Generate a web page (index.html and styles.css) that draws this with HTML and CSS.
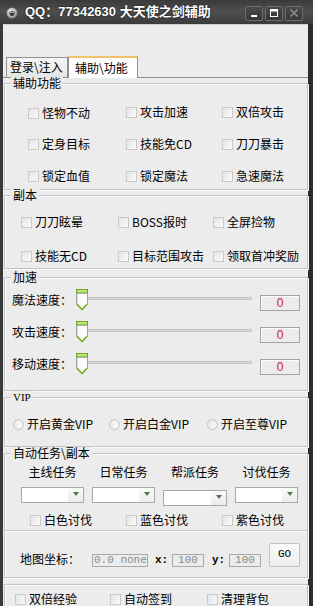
FILE: index.html
```html
<!DOCTYPE html>
<html>
<head>
<meta charset="utf-8">
<link rel="stylesheet" href="styles.css">
</head>
<body>
<div class="window">
  <div class="titlebar">
    <svg class="appicon" width="12" height="12" viewBox="0 0 12 12">
      <defs>
        <radialGradient id="ig" cx="0.4" cy="0.35" r="0.7">
          <stop offset="0" stop-color="#f2f2f2"/>
          <stop offset="1" stop-color="#8a8a8a"/>
        </radialGradient>
      </defs>
      <circle cx="6" cy="6" r="5.5" fill="url(#ig)" stroke="#555" stroke-width="0.6"/>
      <path d="M3.2 5.2 Q6 2.8 8.8 5.2 Q8.4 8.6 6 9 Q3.6 8.6 3.2 5.2Z" fill="#333"/>
      <circle cx="4.9" cy="5.4" r="0.8" fill="#ddd"/>
      <circle cx="7.1" cy="5.4" r="0.8" fill="#ddd"/>
    </svg>
    <span class="title">QQ：77342630 大天使之剑辅助</span>
    <div class="winbtns">
      <span class="wbtn"><svg width="18" height="15" viewBox="0 0 18 15"><rect x="6" y="9" width="6" height="2" fill="#fff"/></svg></span>
      <span class="wbtn"><svg width="18" height="15" viewBox="0 0 18 15"><rect x="5.5" y="3.5" width="7" height="7" fill="none" stroke="#fff" stroke-width="1"/><rect x="5.5" y="3.5" width="7" height="2" fill="#fff"/></svg></span>
      <span class="wbtn"><svg width="18" height="15" viewBox="0 0 18 15"><path d="M5.5 3.5 L12.5 10.5 M12.5 3.5 L5.5 10.5" stroke="#8e8e8e" stroke-width="1.6"/></svg></span>
    </div>
  </div>

  <div class="client">
    <div class="tabs">
      <div class="tab">登录\注入</div>
      <div class="tab active">辅助\功能</div>
    </div>

    <div class="panel">
      <div class="group g1">
        <div class="legend">辅助功能</div>
        <div class="grid g1grid">
          <label class="cb low"><span class="box"></span>怪物不动</label>
          <label class="cb"><span class="box"></span>攻击加速</label>
          <label class="cb"><span class="box"></span>双倍攻击</label>
          <label class="cb"><span class="box"></span>定身目标</label>
          <label class="cb"><span class="box"></span>技能免CD</label>
          <label class="cb"><span class="box"></span>刀刀暴击</label>
          <label class="cb"><span class="box"></span>锁定血值</label>
          <label class="cb"><span class="box"></span>锁定魔法</label>
          <label class="cb"><span class="box"></span>急速魔法</label>
        </div>
      </div>

      <div class="group g2">
        <div class="legend">副本</div>
        <div class="grid g2grid">
          <label class="cb"><span class="box"></span>刀刀眩晕</label>
          <label class="cb"><span class="box"></span>BOSS报时</label>
          <label class="cb"><span class="box"></span>全屏捡物</label>
          <label class="cb"><span class="box"></span>技能无CD</label>
          <label class="cb"><span class="box"></span>目标范围攻击</label>
          <label class="cb"><span class="box"></span>领取首冲奖励</label>
        </div>
      </div>

      <div class="group g3">
        <div class="legend">加速</div>
        <div class="speeds">
          <div class="srow">
            <span class="slabel">魔法速度：</span>
            <div class="slider">
              <svg class="thumb" width="12" height="22" viewBox="0 0 12 22"><rect x="0.5" y="0.5" width="11" height="4" fill="#9ad04a" stroke="#6f9a2c"/><rect x="1" y="1" width="10" height="1.5" fill="#c8ee88"/><path d="M0.5 4.5 H11.5 V15 L6 20.5 L0.5 15 Z" fill="#fbfbfb" stroke="#a8a8a8"/><path d="M1.5 5 V14.6" stroke="#d6d6d6"/><path d="M0.8 15 L6 20.6 L11.2 15" fill="none" stroke="#78b02c" stroke-width="1.6"/></svg>
              <span class="track"></span>
            </div>
            <span class="val">0</span>
          </div>
          <div class="srow">
            <span class="slabel">攻击速度：</span>
            <div class="slider">
              <svg class="thumb" width="12" height="22" viewBox="0 0 12 22"><rect x="0.5" y="0.5" width="11" height="4" fill="#9ad04a" stroke="#6f9a2c"/><rect x="1" y="1" width="10" height="1.5" fill="#c8ee88"/><path d="M0.5 4.5 H11.5 V15 L6 20.5 L0.5 15 Z" fill="#fbfbfb" stroke="#a8a8a8"/><path d="M1.5 5 V14.6" stroke="#d6d6d6"/><path d="M0.8 15 L6 20.6 L11.2 15" fill="none" stroke="#78b02c" stroke-width="1.6"/></svg>
              <span class="track"></span>
            </div>
            <span class="val">0</span>
          </div>
          <div class="srow">
            <span class="slabel">移动速度：</span>
            <div class="slider">
              <svg class="thumb" width="12" height="22" viewBox="0 0 12 22"><rect x="0.5" y="0.5" width="11" height="4" fill="#9ad04a" stroke="#6f9a2c"/><rect x="1" y="1" width="10" height="1.5" fill="#c8ee88"/><path d="M0.5 4.5 H11.5 V15 L6 20.5 L0.5 15 Z" fill="#fbfbfb" stroke="#a8a8a8"/><path d="M1.5 5 V14.6" stroke="#d6d6d6"/><path d="M0.8 15 L6 20.6 L11.2 15" fill="none" stroke="#78b02c" stroke-width="1.6"/></svg>
              <span class="track"></span>
            </div>
            <span class="val">0</span>
          </div>
        </div>
      </div>

      <div class="group g4">
        <div class="legend latin">VIP</div>
        <div class="grid g4grid">
          <label class="cb"><span class="radio"></span>开启黄金VIP</label>
          <label class="cb"><span class="radio"></span>开启白金VIP</label>
          <label class="cb"><span class="radio"></span>开启至尊VIP</label>
        </div>
      </div>

      <div class="group g5">
        <div class="legend">自动任务\副本</div>
        <div class="tasks">
          <span class="tlabel">主线任务</span>
          <span class="tlabel">日常任务</span>
          <span class="tlabel">帮派任务</span>
          <span class="tlabel">讨伐任务</span>
          <span class="combo"><span class="cbtn"><span class="arrow"></span></span></span>
          <span class="combo"><span class="cbtn"><span class="arrow"></span></span></span>
          <span class="combo low3"><span class="cbtn"><span class="arrow"></span></span></span>
          <span class="combo"><span class="cbtn"><span class="arrow"></span></span></span>
        </div>
        <div class="grid g5grid">
          <label class="cb"><span class="box"></span>白色讨伐</label>
          <label class="cb"><span class="box"></span>蓝色讨伐</label>
          <label class="cb"><span class="box"></span>紫色讨伐</label>
        </div>
      </div>

      <div class="group g6">
        <div class="maprow">
          <span class="mlabel">地图坐标：</span>
          <span class="inp wide">0.0 none</span>
          <span class="axis">x:</span>
          <span class="inp">100</span>
          <span class="axis">y:</span>
          <span class="inp">100</span>
          <span class="gobtn">GO</span>
        </div>
      </div>

      <div class="group g7">
        <div class="grid g7grid">
          <label class="cb"><span class="box"></span>双倍经验</label>
          <label class="cb"><span class="box"></span>自动签到</label>
          <label class="cb"><span class="box"></span>清理背包</label>
        </div>
      </div>
    </div>
  </div>
</div>
</body>
</html>
```

FILE: styles.css
```css
* { box-sizing: border-box; }
html, body { margin: 0; padding: 0; }
body {
  width: 313px;
  height: 606px;
  overflow: hidden;
  background: #2e2e2e;
  font-family: "Noto Sans CJK SC", "Liberation Sans", sans-serif;
  font-size: 12px;
  color: #000;
}
.window {
  width: 313px;
  height: 606px;
  display: flex;
  flex-direction: column;
  background: linear-gradient(90deg, #3a3a3a, #2c2c2c);
}

/* title bar */
.titlebar {
  height: 24px;
  flex: none;
  display: flex;
  align-items: center;
  padding: 0 10px 0 6px;
  background: linear-gradient(#3a3a3a, #4e4e4e 45%, #454545 75%, #3a3a3a);
}
.appicon { flex: none; margin-top: 1px; }
.title {
  margin-left: 7px;
  font-family: "Liberation Sans", "Noto Sans CJK SC", sans-serif;
  font-weight: bold;
  font-size: 13px;
  line-height: 16px;
  color: #fff;
  text-shadow: 0 0 2px #000;
  white-space: nowrap;
}
.winbtns {
  margin-left: auto;
  display: flex;
  gap: 2px;
  margin-top: 2px;
}
.wbtn {
  width: 18px;
  height: 15px;
  border: 1px solid #6c6c6c;
  border-radius: 2px;
  background: linear-gradient(#4a4a4a, #383838);
  display: flex;
  align-items: center;
  justify-content: center;
  overflow: hidden;
}
.wbtn svg { flex: none; }

/* client */
.client {
  flex: 1;
  margin: 0 5px 0 3px;
  background: #ececec;
  padding-top: 33px;
  border-top: 1px solid #cfcfcf;
  margin-top: 0;
}
.tabs {
  height: 21px;
  display: flex;
  align-items: flex-end;
  padding-left: 3px;
  border-bottom: 1px solid #8f8f8f;
  margin-top: -1px;
}
.tab {
  height: 20px;
  width: 62px;
  border: 1px solid #8f8f8f;
  border-bottom: none;
  background: linear-gradient(#f6f6f6, #e4e4e4);
  padding-left: 3px;
  line-height: 18px;
  font-size: 12px;
  white-space: nowrap;
}
.tab.active {
  height: 22px;
  width: 70px;
  margin-bottom: -1px;
  background: #fff;
  border-top: 2px solid #f1c36a;
  padding-left: 6px;
  line-height: 19px;
  position: relative;
  z-index: 1;
}

.panel {
  padding-top: 5px;
  display: flex;
  flex-direction: column;
  background: #ececec;
}

/* group boxes */
.group {
  width: 304px;
  margin-left: 1px;
  border: 1px solid #c4c4c4;
  box-shadow: inset 1px 1px 0 #fafafa, 1px 1px 0 #fafafa;
  flex: none;
}
.legend {
  display: block;
  width: max-content;
  margin: -7px 0 0 6px;
  padding: 0 2px;
  line-height: 12px;
  height: 12px;
  background: #ececec;
  font-size: 12px;
}
.legend.latin {
  font-family: "Liberation Serif", serif;
  font-size: 11px;
}
.g1 { height: 107px; }
.g2 { height: 74px; margin-top: 5px; }
.g3 { height: 114px; margin-top: 8px; }
.g4 { height: 50px; margin-top: 6px; }
.g5 { height: 78px; margin-top: 6px; }
.g6 { height: 48px; margin-top: -1px; }
.g7 { height: 40px; margin-top: 6px; }

.grid {
  display: grid;
  grid-auto-rows: 20px;
  align-items: center;
}
.g1grid { grid-template-columns: 98px 96px 1fr; row-gap: 12px; padding: 13px 0 0 23px; }
.g2grid { grid-template-columns: 97px 95px 1fr; row-gap: 14px; padding: 11px 0 0 16px; }
.g4grid { grid-template-columns: 96px 98px 1fr; padding: 11px 0 0 8px; }
.g5grid { grid-template-columns: 96px 96px 1fr; grid-auto-rows: 14px; padding: 10px 0 0 25px; }
.g7grid { grid-template-columns: 95px 97px 1fr; grid-auto-rows: 14px; padding: 7px 0 0 10px; }

.cb {
  display: flex;
  align-items: center;
  gap: 3px;
  white-space: nowrap;
  line-height: 14px;
}
.cb.low { padding-top: 2px; }
.box {
  width: 11px;
  height: 11px;
  flex: none;
  border: 1px solid #cacaca;
  background: linear-gradient(135deg, #e6e6e6, #f8f8f8);
}
.radio {
  width: 11px;
  height: 11px;
  flex: none;
  border: 1px solid #c6c6c6;
  border-radius: 50%;
  background: radial-gradient(circle at 60% 60%, #fafafa, #e2e2e2);
}

/* speed sliders */
.speeds {
  display: flex;
  flex-direction: column;
  gap: 10px;
  padding: 6px 0 0 7px;
}
.srow {
  height: 22px;
  display: flex;
  align-items: center;
}
.slabel {
  width: 64px;
  flex: none;
  line-height: 14px;
  white-space: nowrap;
}
.slider {
  width: 176px;
  height: 22px;
  flex: none;
  display: flex;
}
.thumb { flex: none; }
.track {
  flex: 1;
  height: 3px;
  margin-top: 8px;
  border: 1px solid #c2c2c2;
  border-left: none;
  background: #dedede;
}
.val {
  width: 40px;
  height: 16px;
  margin-left: 8px;
  align-self: flex-end;
  border: 1px solid #a4a4a4;
  box-shadow: inset 1px 1px 0 #fff;
  background: #ececec;
  color: #d02020;
  text-align: center;
  line-height: 14px;
  font-family: "Liberation Sans", sans-serif;
  font-size: 12px;
}

/* tasks */
.tasks {
  display: grid;
  grid-template-columns: 63px 63px 64px 63px;
  column-gap: 8px;
  row-gap: 9px;
  grid-template-rows: 12px 16px;
  padding: 7px 0 0 16px;
}
.tlabel {
  text-align: center;
  line-height: 12px;
  white-space: nowrap;
}
.combo {
  height: 16px;
  border: 1px solid #a8a8a8;
  background: #fff;
  display: flex;
  justify-content: flex-end;
}
.combo.low3 { margin-top: 3px; }
.cbtn {
  width: 15px;
  height: 14px;
  background: linear-gradient(#fafafa, #ececec);
  display: flex;
  align-items: center;
  justify-content: center;
}
.arrow {
  width: 0;
  height: 0;
  border-left: 3px solid transparent;
  border-right: 3px solid transparent;
  border-top: 4px solid #4f7a4f;
  margin-top: -2px;
}

/* map coordinates */
.maprow {
  display: flex;
  align-items: flex-end;
  height: 24px;
  margin: 12px 0 0 15px;
}
.mlabel {
  width: 72px;
  flex: none;
  line-height: 16px;
  white-space: nowrap;
}
.inp {
  width: 32px;
  height: 13px;
  flex: none;
  border: 1px solid #a8a8a8;
  background: #ececec;
  color: #8a8a8a;
  font-family: "Liberation Mono", monospace;
  font-size: 11px;
  line-height: 11px;
  text-align: center;
  margin-right: 8px;
  overflow: hidden;
}
.inp.wide { width: 56px; text-align: left; padding-left: 1px; margin-right: 7px; }
.axis {
  width: 13px;
  flex: none;
  margin-right: 4px;
  font-family: "Liberation Mono", monospace;
  font-weight: bold;
  font-size: 11px;
  line-height: 13px;
}
.gobtn {
  width: 31px;
  height: 24px;
  flex: none;
  border: 1px solid #c2c2c2;
  border-radius: 2px;
  background: linear-gradient(#fbfbfb, #eeeeee);
  text-align: center;
  font-family: "Liberation Mono", monospace;
  font-size: 11px;
  line-height: 20px;
}
```
